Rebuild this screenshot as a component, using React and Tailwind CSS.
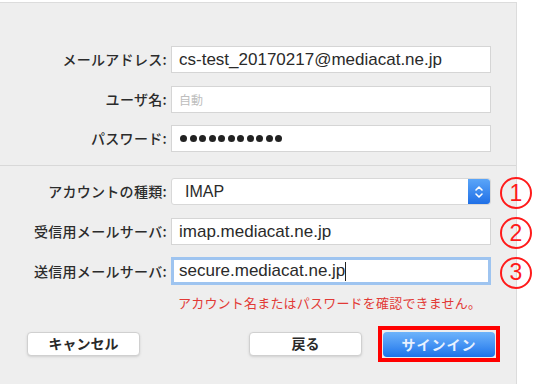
import React from 'react';

const font = { fontFamily: '"Noto Sans CJK JP", "Noto Sans", sans-serif' };

function Field({ label, children, mark, className = '' }) {
  return (
    <div className={`flex items-center h-[27px] ${className}`}>
      <div className="w-[168px] shrink-0 pr-[1px] text-right text-[14px] font-medium text-[#2b2b2b] tracking-[0.3px] whitespace-nowrap">{label}</div>
      <div className="ml-[3px] w-[320px] shrink-0 h-full">{children}</div>
      {mark && (
        <div
          className="ml-[9px] mt-[3px] shrink-0 w-[32px] h-[32px] rounded-full border-[2.5px] border-[#ff1a1a] flex items-center justify-center text-[23px] leading-none text-[#ff1a1a]"
          style={{ fontFamily: '"Liberation Sans", sans-serif' }}
        >
          {mark}
        </div>
      )}
    </div>
  );
}

function Input({ value, placeholder, focused }) {
  return (
    <div
      className={`h-full bg-white flex items-center text-[17px] ${
        focused
          ? 'border-[3px] border-[#9ec4f0] px-[5px]'
          : 'border border-[#d5d5d5] px-[7px]'
      }`}
      style={{ fontFamily: '"Liberation Sans", "Noto Sans CJK JP", sans-serif' }}
    >
      {value ? (
        <span className="text-[#2a2a2a]">{value}</span>
      ) : (
        <span className="text-[#bdbdbd] text-[12px]" style={font}>{placeholder}</span>
      )}
      {focused && <span className="w-px h-[19px] bg-[#222]"></span>}
    </div>
  );
}

export default function App() {
  return (
    <div className="w-[537px] h-[386px] bg-white overflow-hidden" style={font}>
      <div className="w-[517px] h-[382px] mt-[2px] bg-[#eeeeee] border-t border-[#dcdcdc] border-r border-[#d2d2d2]">
        <div className="pt-[43px]">
          <Field label="メールアドレス:">
            <Input value="cs-test_20170217@mediacat.ne.jp" />
          </Field>
          <Field label="ユーザ名:" className="mt-[13px]">
            <Input placeholder="自動" />
          </Field>
          <Field label="パスワード:" className="mt-[12px]">
            <div className="h-full bg-white border border-[#d5d5d5] flex items-center px-[8px] gap-[2.5px]">
              {Array.from({ length: 11 }).map((_, i) => (
                <span key={i} className="w-[7px] h-[7px] rounded-full bg-[#222]"></span>
              ))}
            </div>
          </Field>
        </div>
        <div className="mt-[13px] border-t border-[#d8d8d8]"></div>
        <div className="pt-[12px]">
          <Field label="アカウントの種類:" mark="1">
            <div className="h-full bg-white border border-[#d8d8d8] rounded-[3px] flex items-center">
              <span className="flex-1 pl-[13px] text-[16px] text-[#2a2a2a]" style={{ fontFamily: '"Liberation Sans", sans-serif' }}>IMAP</span>
              <div className="w-[22px] h-full rounded-r-[3px] bg-gradient-to-b from-[#5aa5f8] to-[#1f6fe6] flex items-center justify-center">
                <svg width="10" height="16" viewBox="0 0 10 16" fill="none" stroke="white" strokeWidth="1.6" strokeLinecap="round" strokeLinejoin="round">
                  <path d="M2 6 L5 3 L8 6" />
                  <path d="M2 10 L5 13 L8 10" />
                </svg>
              </div>
            </div>
          </Field>
          <Field label="受信用メールサーバ:" mark="2" className="mt-[13px]">
            <Input value="imap.mediacat.ne.jp" />
          </Field>
          <Field label="送信用メールサーバ:" mark="3" className="mt-[12px] h-[28px]">
            <Input value="secure.mediacat.ne.jp" focused />
          </Field>
          <div className="mt-[8px] pl-[178px] text-[13px] text-[#e23a36] tracking-[0.2px]">
            アカウント名またはパスワードを確認できません。
          </div>
          <div className="flex items-center mt-[13px] pl-[27px]">
            <button className="w-[113px] h-[24px] bg-white border border-[#d0d0d0] rounded-[4px] text-[14px] font-semibold text-[#2a2a2a] shadow-sm">キャンセル</button>
            <button className="ml-[109px] w-[113px] h-[24px] bg-white border border-[#d0d0d0] rounded-[4px] text-[14px] font-semibold text-[#2a2a2a] shadow-sm">戻る</button>
            <div className="ml-[16px] border-[4px] border-[#ff0000] p-[1px]">
              <button className="w-[112px] h-[25px] rounded-[4px] bg-gradient-to-b from-[#6eb4fb] to-[#1a73ea] text-[14px] font-semibold text-[#e8f1ff] tracking-[1px]">サインイン</button>
            </div>
          </div>
        </div>
      </div>
    </div>
  );
}
